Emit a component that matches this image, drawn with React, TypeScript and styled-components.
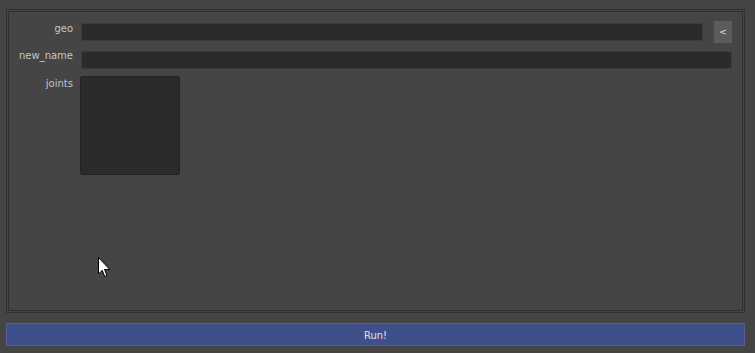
import styled, { createGlobalStyle } from "styled-components";

const GlobalStyle = createGlobalStyle`
  html, body {
    margin: 0;
    padding: 0;
    background: #444444;
    font-family: "DejaVu Sans", "Liberation Sans", sans-serif;
  }
`;

const Page = styled.div`
  position: relative;
  width: 755px;
  height: 353px;
  padding: 9px 10px 0 6px;
  box-sizing: border-box;
  display: flex;
  flex-direction: column;
`;

const Frame = styled.div`
  width: 739px;
  height: 304px;
  box-sizing: border-box;
  border: 3px double #2f2f2f;
  background: #454545;
  padding: 9px 10px 0 0;
  display: grid;
  grid-template-columns: 64px 1fr;
  grid-auto-rows: min-content;
  column-gap: 8px;
`;

const Label = styled.div<{ top: number }>`
  color: #c4c4c4;
  font-size: 10px;
  line-height: 12px;
  text-align: right;
  padding-top: ${(p) => p.top}px;
`;

const Row = styled.div<{ mb: number }>`
  display: flex;
  align-items: center;
  gap: 11px;
  height: 22px;
  margin-bottom: ${(p) => p.mb}px;
`;

const Field = styled.div`
  flex: 1;
  height: 18px;
  box-sizing: border-box;
  background: #2b2b2b;
  border: 1px solid #3b3b3b;
  border-radius: 2px;
`;

const PickButton = styled.div`
  width: 18px;
  height: 22px;
  background: #5b5b5b;
  color: #d8e6f0;
  font-size: 9px;
  display: flex;
  align-items: center;
  justify-content: center;
`;

const ListBox = styled.div`
  width: 100px;
  height: 99px;
  margin-left: -1px;
  box-sizing: border-box;
  background: #2b2b2b;
  border: 1px solid #232323;
  border-radius: 2px;
`;

const RunButton = styled.div`
  margin-top: 10px;
  width: 739px;
  height: 23px;
  box-sizing: border-box;
  padding-top: 1px;
  background: #3f4f8a;
  border: 1px solid #56608e;
  color: #e2e2e2;
  font-size: 10px;
  display: flex;
  align-items: center;
  justify-content: center;
`;

const Cursor = styled.svg`
  position: absolute;
  left: 98px;
  top: 257px;
`;

export default function App() {
  return (
    <>
      <GlobalStyle />
      <Page>
        <Frame>
          <Label top={2}>geo</Label>
          <Row mb={6}>
            <Field />
            <PickButton>&lt;</PickButton>
          </Row>
          <Label top={1}>new_name</Label>
          <Row mb={5}>
            <Field />
          </Row>
          <Label top={2}>joints</Label>
          <div>
            <ListBox />
          </div>
        </Frame>
        <RunButton>Run!</RunButton>
        <Cursor width="14" height="21" viewBox="0 0 14 21">
          <path
            d="M0.5 0.5 L0.5 17 L4.2 13.3 L6.8 19.5 L9 18.5 L6.5 12.5 L11.8 12.5 Z"
            fill="#ffffff"
            stroke="#000000"
            strokeWidth="1"
          />
        </Cursor>
      </Page>
    </>
  );
}
